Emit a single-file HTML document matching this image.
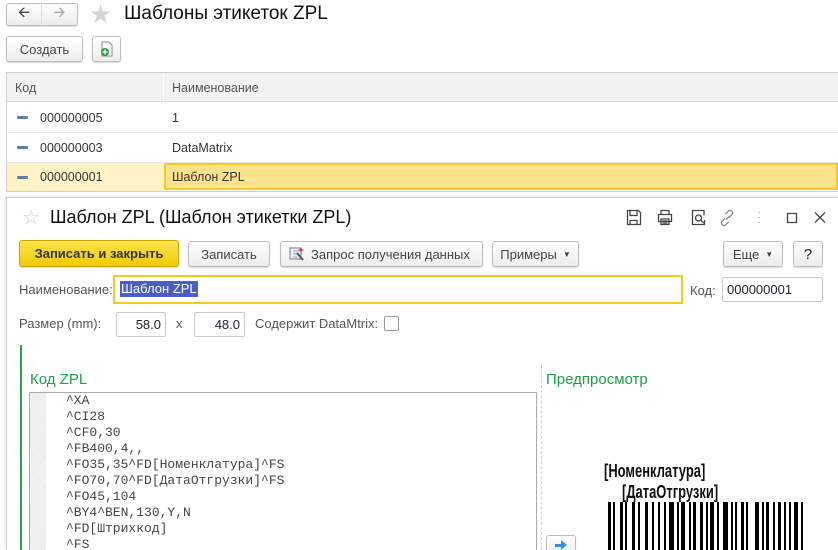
<!DOCTYPE html>
<html><head><meta charset="utf-8"><style>
*{box-sizing:border-box;margin:0;padding:0}
html,body{overflow:hidden}
body{width:838px;height:550px;overflow:hidden;background:#fff;font-family:"Liberation Sans",Arial,sans-serif;font-size:13px;color:#333;position:relative}
.a{position:absolute}
.btn{position:absolute;border:1px solid #bdbdbd;border-radius:3px;background:linear-gradient(#fff,#ececec);box-shadow:0 1px 1px rgba(0,0,0,.15);display:flex;align-items:center;justify-content:center;color:#444;font-size:13px}
.cell{position:absolute;display:flex;align-items:center;font-size:12.5px;color:#333}
.mk{position:absolute;left:17px;width:11px;height:3px;background:#5f7fa8;border-radius:1px}
.inp{position:absolute;border:1px solid #c8c8c8;border-radius:2px;background:#fff;display:flex;align-items:center}
.code{position:absolute;left:66px;font-family:"Liberation Mono",monospace;font-size:13px;color:#444;line-height:16px}
</style></head><body>
<div class="btn" style="left:6px;top:3px;width:72px;height:23px;padding:0">
 <div style="width:36px;text-align:center;color:#444;font-size:15px;border-right:1px solid #ddd">&#129128;</div>
 <div style="width:36px;text-align:center;color:#aaa;font-size:15px">&#129130;</div>
</div>
<div class="a" style="left:89px;top:-1px;font-size:26px;color:#d4d4d4">★</div>
<div class="a" style="left:124px;top:3px;font-size:19px;color:#111">Шаблоны этикеток ZPL</div>
<div class="btn" style="left:6px;top:36px;width:77px;height:26px">Создать</div>
<div class="btn" style="left:92px;top:36px;width:29px;height:26px">
 <svg width="14" height="16" viewBox="0 0 14 16"><path d="M2 1h7l3 3v11H2z" fill="#fff" stroke="#888"/><circle cx="5" cy="11" r="4" fill="#2a9d3a"/><path d="M5 8.5v5M2.5 11h5" stroke="#fff" stroke-width="1.4"/></svg>
</div>
<div class="a" style="left:6px;top:72px;width:832px;height:120px;border:1px solid #d0d0d0;border-right:none"></div>
<div class="a" style="left:7px;top:73px;width:831px;height:29px;background:#f2f2f2;border-bottom:1px solid #ddd"></div>
<div class="a" style="left:163px;top:73px;width:1px;height:29px;background:#fff"></div>
<div class="cell" style="left:15px;top:73px;height:29px;color:#555">Код</div>
<div class="cell" style="left:172px;top:73px;height:29px;color:#555">Наименование</div>
<div class="a" style="left:7px;top:132px;width:831px;height:1px;background:#e6e6e6"></div>
<div class="a" style="left:7px;top:162px;width:831px;height:1px;background:#e6e6e6"></div>
<div class="mk" style="top:116px"></div><div class="cell" style="left:40px;top:103px;height:29px">000000005</div><div class="cell" style="left:172px;top:103px;height:29px">1</div>
<div class="mk" style="top:146px"></div><div class="cell" style="left:40px;top:133px;height:29px">000000003</div><div class="cell" style="left:172px;top:133px;height:29px">DataMatrix</div>
<div class="a" style="left:7px;top:163px;width:157px;height:28px;background:#fdf2c6"></div>
<div class="a" style="left:164px;top:163px;width:674px;height:27px;background:#fbe38e;border:2px solid #f7c925"></div>
<div class="mk" style="top:176px"></div><div class="cell" style="left:40px;top:163px;height:28px">000000001</div><div class="cell" style="left:172px;top:163px;height:28px">Шаблон ZPL</div>
<div class="a" style="left:6px;top:197px;width:832px;height:353px;background:#fff;border-left:1px solid #ccc;border-top:1px solid #ccc;box-shadow:-1px -1px 3px rgba(0,0,0,.1)"></div>
<div class="a" style="left:22px;top:205px;font-size:20px;color:#ccc">☆</div>
<div class="a" style="left:50px;top:207px;font-size:18px;color:#111">Шаблон ZPL (Шаблон этикетки ZPL)</div>
<svg class="a" style="left:626px;top:209px" width="200" height="18" viewBox="0 0 200 18" fill="none" stroke="#444" stroke-width="1.3">
 <path d="M1.5 1.5h11l2 2v12h-13z M4 1.5v5h7v-5 M4 15.5v-4h7v4"/>
 <path d="M35 5V1.5h8V5 M32.5 5.5h13v7h-13z M35 10h8v5.5h-8z M36.5 12h5 M36.5 14h5"/>
 <path d="M71 1.5h-4.5v14h12V11 M71 1.5h7v5"/><circle cx="72.5" cy="9" r="3"/><path d="M74.7 11.2l3 3"/>
 <path d="M99 9.5l-3 3a2.5 2.5 0 0 0 3.5 3.5l3-3 M103 8.5l3-3a2.5 2.5 0 0 0-3.5-3.5l-3 3 M100 10.5l3-3" stroke="#888"/>
 <path d="M133 3v.5 M133 8v.5 M133 13v.5" stroke="#888" stroke-width="2"/>
 <path d="M161.5 4.5h9v9h-9z"/>
 <path d="M189 3.5l10 10 M199 3.5l-10 10"/>
</svg>
<div class="btn" style="left:19px;top:240px;width:160px;height:27px;background:linear-gradient(#fbe44a,#f2cb07);border-color:#c9a700;color:#333;font-weight:bold">Записать и закрыть</div>
<div class="btn" style="left:188px;top:241px;width:82px;height:26px">Записать</div>
<div class="btn" style="left:280px;top:241px;width:203px;height:26px;justify-content:flex-start;padding-left:8px">
 <svg width="16" height="16" viewBox="0 0 16 16" style="margin-right:6px"><rect x="1" y="2" width="11" height="11" fill="#eef" stroke="#778"/><path d="M4 5h6M4 8h6M4 11h4" stroke="#99a"/><path d="M8 7l6 7" stroke="#555" stroke-width="2"/><path d="M12 1l1 2 2 1-2 1-1 2-1-2-2-1 2-1z" fill="#d44"/></svg>Запрос получения данных</div>
<div class="btn" style="left:492px;top:241px;width:87px;height:26px">Примеры <span style="font-size:8px;margin-left:6px">▼</span></div>
<div class="btn" style="left:723px;top:241px;width:60px;height:26px">Еще <span style="font-size:8px;margin-left:6px">▼</span></div>
<div class="btn" style="left:793px;top:241px;width:30px;height:26px;font-size:15px;color:#222">?</div>
<div class="a" style="left:19px;top:282px;color:#555">Наименование:</div>
<div class="a" style="left:113px;top:275px;width:570px;height:29px;border:2px solid #f6c91c;background:#fff"></div>
<div class="a" style="left:120px;top:281px;background:#4a5ec4;color:#fff;padding:0 1px;line-height:16px">Шаблон ZPL</div>
<div class="a" style="left:690px;top:283px;color:#555">Код:</div>
<div class="inp" style="left:722px;top:277px;width:101px;height:25px;padding-left:4px;color:#223">000000001</div>
<div class="a" style="left:19px;top:316px;color:#555">Размер (mm):</div>
<div class="inp" style="left:116px;top:312px;width:50px;height:25px;justify-content:flex-end;padding-right:4px;color:#223">58.0</div>
<div class="a" style="left:176px;top:316px;color:#555">x</div>
<div class="inp" style="left:194px;top:312px;width:51px;height:25px;justify-content:flex-end;padding-right:4px;color:#223">48.0</div>
<div class="a" style="left:255px;top:316px;color:#555">Содержит DataMtrix:</div>
<div class="a" style="left:384px;top:316px;width:15px;height:15px;border:1px solid #999;border-radius:2px"></div>
<div class="a" style="left:20px;top:345px;width:2px;height:205px;background:#2aa24a"></div>
<div class="a" style="left:30px;top:371px;font-size:15px;color:#1d9e45">Код ZPL</div>
<div class="a" style="left:29px;top:392px;width:508px;height:158px;border:1px solid #aaa;border-bottom:none;background:#fff"></div>
<div class="a" style="left:30px;top:393px;width:16px;height:157px;background:repeating-linear-gradient(45deg,#e8e8e8 0 1px,#f6f6f6 1px 2px)"></div>
<div class="code" style="top:393px">^XA<br>^CI28<br>^CF0,30<br>^FB400,4,,<br>^FO35,35^FD[Номенклатура]^FS<br>^FO70,70^FD[ДатаОтгрузки]^FS<br>^FO45,104<br>^BY4^BEN,130,Y,N<br>^FD[Штрихкод]<br>^FS</div>
<div class="a" style="left:541px;top:365px;width:0;height:185px;border-left:1px dashed #ccc"></div>
<div class="a" style="left:546px;top:371px;font-size:15px;color:#1d9e45">Предпросмотр</div>
<div class="a" style="left:604px;top:461px;font-size:18px;font-weight:bold;color:#111;transform:scaleX(.72);transform-origin:left;white-space:nowrap">[Номенклатура]</div>
<div class="a" style="left:622px;top:482px;font-size:18px;font-weight:bold;color:#111;transform:scaleX(.72);transform-origin:left;white-space:nowrap">[ДатаОтгрузки]</div>
<svg class="a" style="left:608px;top:502px" width="196" height="48" viewBox="0 0 196 48" fill="#000">
<rect x="0" width="3" height="48"/><rect x="5" width="2" height="48"/><rect x="12" width="3" height="48"/><rect x="17" width="2" height="48"/><rect x="24" width="3" height="48"/><rect x="30" width="2" height="48"/><rect x="37" width="3" height="48"/><rect x="44" width="2" height="48"/><rect x="50" width="2" height="48"/><rect x="56" width="2" height="48"/><rect x="61" width="5" height="48"/><rect x="69" width="2" height="48"/><rect x="73" width="4" height="48"/><rect x="81" width="2" height="48"/><rect x="85" width="3" height="48"/><rect x="92" width="3" height="48"/><rect x="98" width="2" height="48"/><rect x="102" width="4" height="48"/><rect x="109" width="2" height="48"/><rect x="115" width="5" height="48"/><rect x="123" width="2" height="48"/><rect x="127" width="2" height="48"/><rect x="133" width="3" height="48"/><rect x="138" width="2" height="48"/><rect x="147" width="4" height="48"/><rect x="154" width="2" height="48"/><rect x="158" width="3" height="48"/><rect x="165" width="2" height="48"/><rect x="170" width="3" height="48"/><rect x="176" width="2" height="48"/><rect x="181" width="2" height="48"/><rect x="186" width="4" height="48"/><rect x="193" width="2" height="48"/>
</svg>
<div class="btn" style="left:546px;top:535px;width:30px;height:20px">
 <svg width="14" height="12" viewBox="0 0 14 12"><path d="M1 5h6V1l6 5-6 5V8H1z" fill="#3a8fd8"/></svg></div>
</body></html>
